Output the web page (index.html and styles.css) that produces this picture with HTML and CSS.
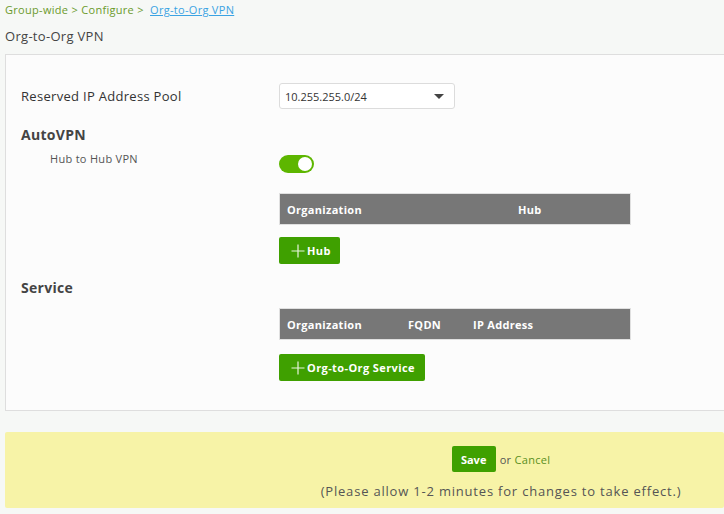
FILE: index.html
```html
<!DOCTYPE html>
<html>
<head>
    <title>Org-to-Org VPN</title>
    <link rel="stylesheet" href="styles.css">
</head>
<body>
    <div class="breadcrumb">
        <span class="crumb">Group-wide &gt; Configure &gt;</span>
        <a href="#" class="crumb-link">Org-to-Org VPN</a>
    </div>
    <h1 class="page-title">Org-to-Org VPN</h1>

    <div class="card">
        <div class="form-row pool-row">
            <span class="row-label">Reserved IP Address Pool</span>
            <div class="select-box">
                <span>10.255.255.0/24</span>
                <span class="caret"></span>
            </div>
        </div>

        <div class="section-title">AutoVPN</div>
        <div class="form-row sub-row">
            <span class="row-label sub-label">Hub to Hub VPN</span>
            <div class="toggle"><span class="knob"></span></div>
        </div>

        <div class="field-block">
            <div class="table-head hub-head">
                <span class="col-org">Organization</span>
                <span>Hub</span>
            </div>
            <button class="add-button">
                <svg width="14" height="14" viewBox="0 0 14 14"><path d="M7 0.5V13.5M0.5 7H13.5" stroke="#e8f5dc" stroke-width="1.2" fill="none"/></svg>
                Hub
            </button>
        </div>

        <div class="section-title service-title">Service</div>
        <div class="field-block">
            <div class="table-head service-head">
                <span class="col-org2">Organization</span>
                <span class="col-fqdn">FQDN</span>
                <span>IP Address</span>
            </div>
            <button class="add-button service-button">
                <svg width="14" height="14" viewBox="0 0 14 14"><path d="M7 0.5V13.5M0.5 7H13.5" stroke="#e8f5dc" stroke-width="1.2" fill="none"/></svg>
                Org-to-Org Service
            </button>
        </div>
    </div>

    <div class="save-bar">
        <div class="save-line">
            <button class="save-button">Save</button>
            <span class="or-text">or <a href="#" class="cancel-link">Cancel</a></span>
        </div>
        <div class="note">(Please allow 1-2 minutes for changes to take effect.)</div>
    </div>
</body>
</html>
```

FILE: styles.css
```css
body {
    margin: 0;
    padding: 0 0 0 5px;
    background-color: #f6f8f6;
    font-family: 'Open Sans', sans-serif;
    letter-spacing: 0.3px;
    color: #333;
    overflow: hidden;
}
.breadcrumb {
    font-size: 11px;
    line-height: 20px;
}
.crumb {
    color: #6b9a2c;
}
.crumb-link {
    color: #3ba3e3;
    margin-left: 3px;
}
.page-title {
    font-size: 13px;
    font-weight: normal;
    color: #444;
    margin: 6px 0 0 0;
    line-height: 20px;
}
.card {
    margin-top: 8px;
    background-color: #fcfcfc;
    border: 1px solid #dedede;
    border-right: none;
    padding: 0 0 29px 15px;
}
.form-row {
    display: flex;
    align-items: center;
}
.row-label {
    width: 258px;
    font-size: 13px;
    color: #333;
}
.pool-row {
    margin-top: 28px;
}
.select-box {
    width: 176px;
    height: 26px;
    border: 1px solid #dcdcdc;
    border-radius: 3px;
    background-color: #fff;
    box-sizing: border-box;
    display: flex;
    align-items: center;
    justify-content: space-between;
    padding: 0 10px 0 5px;
    font-size: 11px;
    letter-spacing: 0;
    color: #333;
}
.caret {
    width: 0;
    height: 0;
    border-left: 5px solid transparent;
    border-right: 5px solid transparent;
    border-top: 5px solid #444;
}
.section-title {
    font-size: 14px;
    font-weight: bold;
    color: #444;
    margin-top: 17px;
    line-height: 18px;
}
.sub-row {
    margin-top: 11px;
    align-items: flex-start;
}
.sub-label {
    font-size: 11px;
    padding-left: 29px;
    width: 229px;
    color: #555;
    margin-top: -4px;
}
.toggle {
    width: 35px;
    height: 18px;
    border-radius: 9px;
    background-color: #5db600;
    position: relative;
}
.knob {
    position: absolute;
    right: 2px;
    top: 2px;
    width: 14px;
    height: 14px;
    border-radius: 50%;
    background-color: #fff;
}
.field-block {
    padding-left: 258px;
}
.table-head {
    margin-top: 20px;
    width: 352px;
    height: 32px;
    background-color: #777;
    border: 1px solid #e0e0e0;
    box-sizing: border-box;
    display: flex;
    align-items: center;
    color: #fff;
    font-size: 11px;
    font-weight: bold;
    padding-left: 7px;
}
.col-org {
    width: 231px;
}
.col-org2 {
    width: 121px;
}
.col-fqdn {
    width: 65px;
}
.add-button {
    margin-top: 12px;
    height: 27px;
    border: none;
    border-radius: 2px;
    background-color: #3fa000;
    color: #fff;
    font-family: 'Open Sans', sans-serif;
    font-size: 11px;
    font-weight: bold;
    letter-spacing: 0.4px;
    padding: 0 9px 0 12px;
    display: flex;
    align-items: center;
    gap: 2px;
}
.service-title {
    margin-top: 15px;
}
.service-head {
    margin-top: 11px;
}
.service-button {
    margin-top: 14px;
    padding-right: 10px;
}
.save-bar {
    margin-top: 21px;
    height: 76px;
    background-color: #f7f3a7;
    border-radius: 2px;
    display: flex;
    flex-direction: column;
    align-items: center;
    padding-left: 273px;
}
.save-line {
    margin-top: 14px;
    display: flex;
    align-items: center;
    gap: 4px;
}
.save-button {
    height: 26px;
    width: 44px;
    border: none;
    border-radius: 2px;
    background-color: #3fa000;
    color: #fff;
    font-family: 'Open Sans', sans-serif;
    font-size: 11px;
    font-weight: bold;
    padding: 0;
}
.or-text {
    font-size: 11px;
    color: #555;
}
.cancel-link {
    color: #5a8f22;
    text-decoration: none;
}
.note {
    margin-top: 10px;
    font-size: 13px;
    letter-spacing: 0.8px;
    color: #555;
    white-space: nowrap;
}
```
